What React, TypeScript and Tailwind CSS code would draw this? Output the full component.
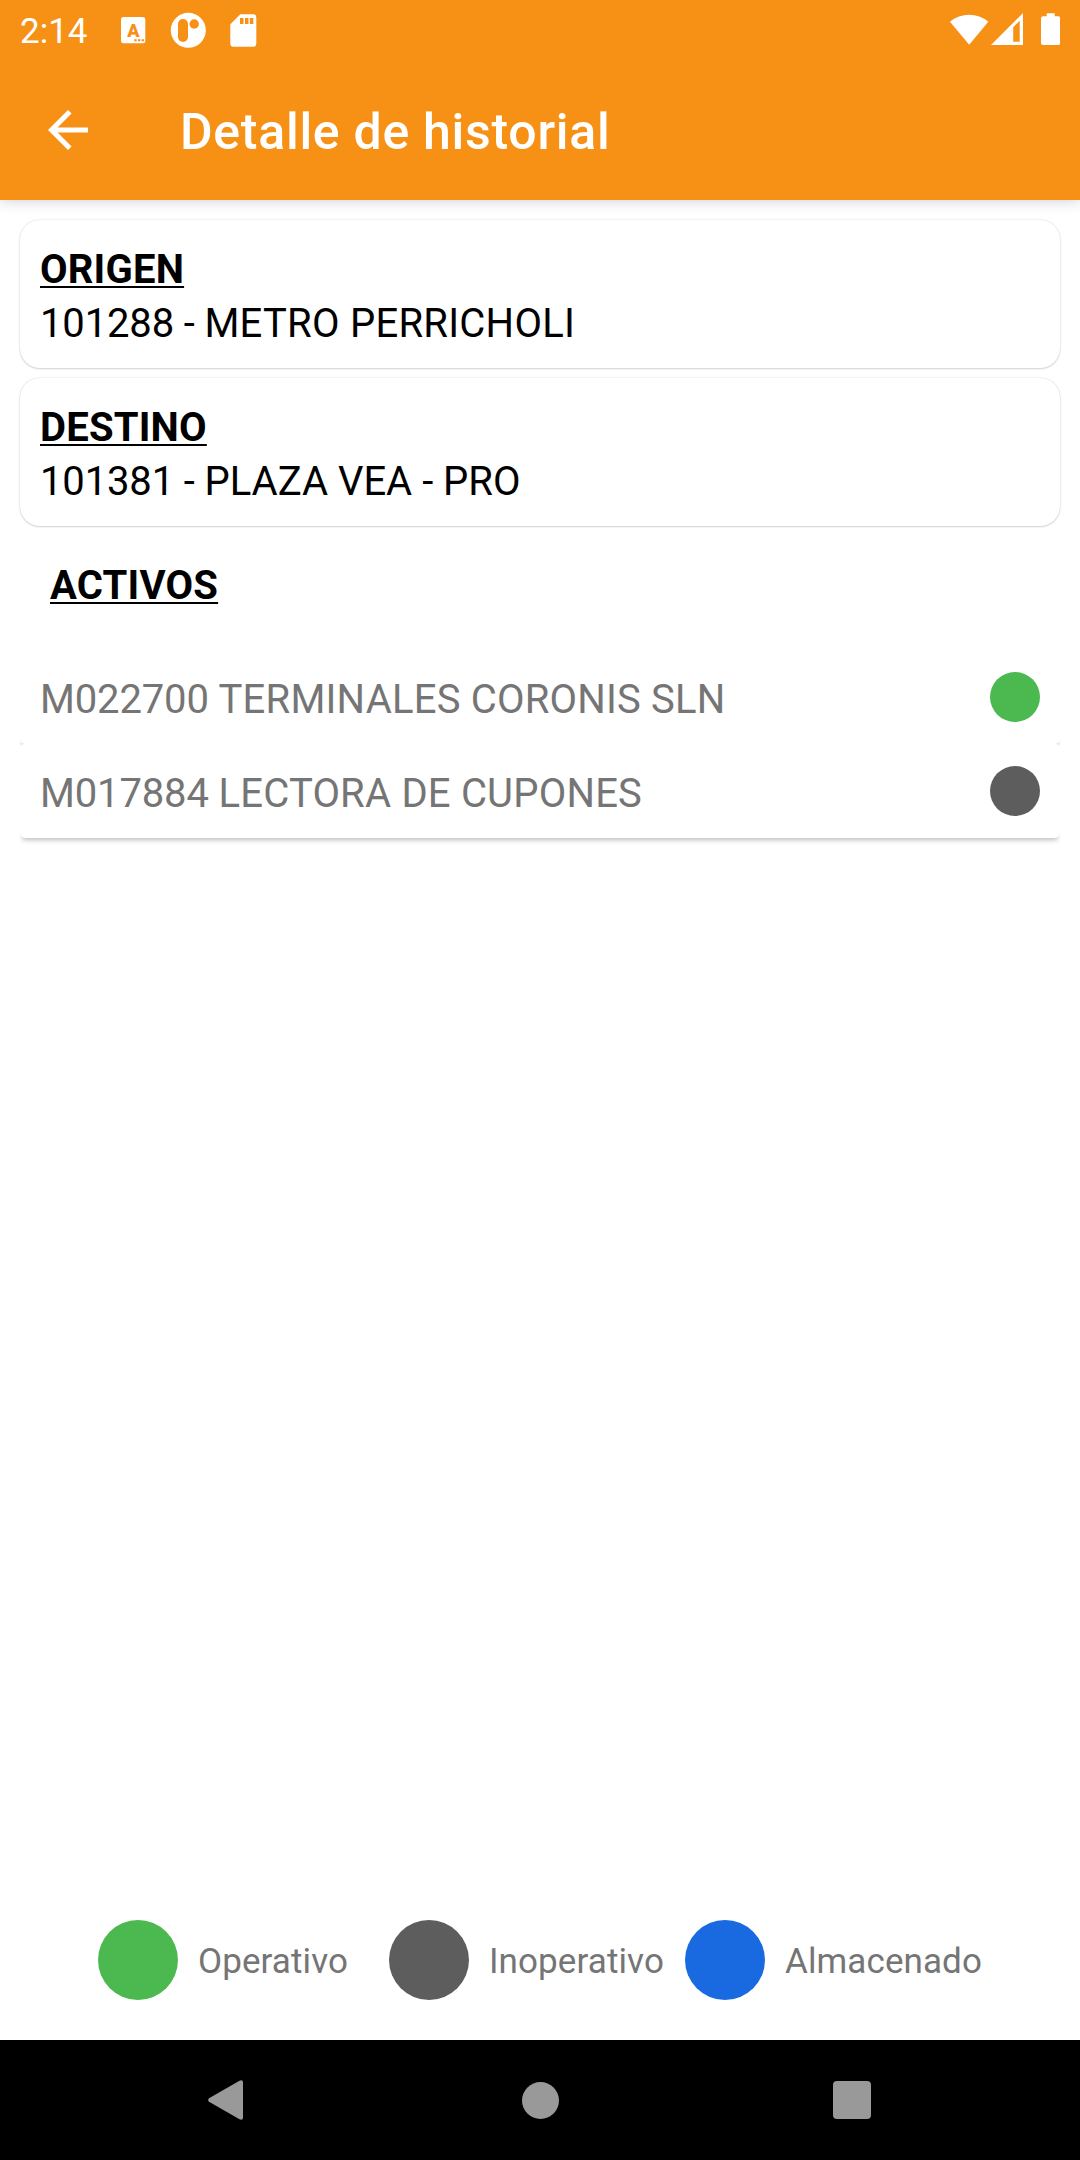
interface Asset {
  code: string;
  name: string;
  color: string;
}

interface Place {
  title: string;
  code: string;
  name: string;
  tracking: string;
}

const places: Place[] = [
  { title: "ORIGEN", code: "101288 - ", name: "METRO PERRICHOLI", tracking: "tracking-[0.25px]" },
  { title: "DESTINO", code: "101381 - ", name: "PLAZA VEA - PRO", tracking: "tracking-normal" },
];

const assets: Asset[] = [
  { code: "M022700 ", name: "TERMINALES CORONIS SLN", color: "bg-[#4cb950]" },
  { code: "M017884 ", name: "LECTORA DE CUPONES", color: "bg-[#5d5d5d]" },
];

const legend = [
  { label: "Operativo", color: "bg-[#4cb950]", width: "w-[291px]" },
  { label: "Inoperativo", color: "bg-[#5d5d5d]", width: "w-[296px]" },
  { label: "Almacenado", color: "bg-[#196ae1]", width: "" },
];

const StatusBar = () => (
  <div className="flex h-[63px] items-center justify-between px-5">
    <div className="flex items-center">
      <span className="w-[99px] text-[35px] leading-none">2:14</span>
      <svg width="140" height="63" viewBox="119 0 140 63" fill="currentColor">
        <rect x="121" y="17" width="24.3" height="26.3" rx="2.5" />
        <text x="133.3" y="36.5" fontSize="18" fontWeight="900" textAnchor="middle" fill="#f79116">
          A
        </text>
        <path d="M134.3 39.2h2.4v2h-2.4zM138 39.2h2.4v2H138zM141.6 39.2h2.4v2h-2.4z" fill="#f79116" />
        <circle cx="188.3" cy="30.3" r="17.5" />
        <rect x="178" y="19" width="10" height="23" rx="5" fill="#f79116" />
        <circle cx="194.2" cy="24" r="4.7" fill="#f79116" />
        <path d="M240.3 14.3h12.8a3.2 3.2 0 0 1 3.2 3.2v26a3.2 3.2 0 0 1-3.2 3.2h-19.6a3.2 3.2 0 0 1-3.2-3.2V24.3z" />
        <path d="M240 18h3.5v6H240zM245 18h3.5v6H245zM249.8 18h3.5v6h-3.5z" fill="#f79116" />
      </svg>
    </div>
    <svg width="110" height="63" viewBox="950 0 110 63" fill="currentColor">
      <path d="M950 21.7a30 30 0 0 1 38.3 0L969.2 44.8z" />
      <path fillRule="evenodd" d="M1023 13v32h-32zM1019.7 20.7l-6.5 6.6v14.5h6.5z" />
      <path d="M1046.7 13.3h8v3h3.5a2 2 0 0 1 2 2V43a2 2 0 0 1-2 2H1043a2 2 0 0 1-2-2V18.3a2 2 0 0 1 2-2h3.7z" />
    </svg>
  </div>
);

const AppBar = () => (
  <div className="flex h-[137px] items-center pl-12">
    <svg className="mb-1" width="40" height="40" viewBox="4 4 16 16" fill="currentColor">
      <path d="M20 11H7.83l5.59-5.59L12 4l-8 8 8 8 1.41-1.41L7.83 13H20v-2z" />
    </svg>
    <h1 className="ml-[92px] pt-px text-[50px] font-medium tracking-[0.0145em]">Detalle de historial</h1>
  </div>
);

const PlaceCard = ({ place }: { place: Place }) => (
  <section className="h-[148px] rounded-[20px] bg-white px-5 pt-[23px] text-[40px] leading-[54px] text-black shadow-[0_0_2px_rgba(0,0,0,0.16),0_1px_2px_rgba(0,0,0,0.14)]">
    <h2 className="font-bold tracking-[0.2px] underline decoration-2 underline-offset-[3px]">{place.title}</h2>
    <p className="whitespace-pre">
      <span className="tracking-[-0.15px]">{place.code}</span>
      <span className={place.tracking}>{place.name}</span>
    </p>
  </section>
);

const AssetRow = ({ item }: { item: Asset }) => (
  <li className="flex h-[94px] items-center justify-between rounded-[5px] bg-white px-5 text-[40px] text-[#757575] shadow-[0_4px_5px_-2px_rgba(0,0,0,0.26)]">
    <p className="pt-1.5 whitespace-pre">
      <span className="tracking-[-0.15px]">{item.code}</span>
      <span className="tracking-[0.2px]">{item.name}</span>
    </p>
    <span className={`size-[50px] rounded-full ${item.color}`} />
  </li>
);

const Legend = () => (
  <div className="mt-auto mb-10 flex pl-[78px] text-[35px] tracking-[0.1px] text-[#757575]">
    {legend.map(({ label, color, width }) => (
      <div key={label} className={`flex items-center gap-5 ${width}`}>
        <span className={`size-20 shrink-0 rounded-full ${color}`} />
        <span className="pt-1">{label}</span>
      </div>
    ))}
  </div>
);

const NavBar = () => (
  <nav className="flex h-[120px] items-center justify-between bg-black pr-[209px] pl-[208px] text-[#999]">
    <svg width="36" height="40" viewBox="0 0 36 40" fill="currentColor">
      <path d="M1 18.2 31.5.7Q35-.8 35 2.500v35q0 3.300-3.500 1.800L1 21.800Q-.7 20 1 18.200z" />
    </svg>
    <span className="ml-[3px] size-[37px] rounded-full bg-current" />
    <span className="size-[38px] rounded-[4px] bg-current" />
  </nav>
);

const App = () => (
  <div className="flex h-[2160px] w-[1080px] flex-col bg-white font-[Roboto,sans-serif]">
    <header className="bg-[#f79116] text-white shadow-[0_2px_12px_rgba(60,40,80,0.2)]">
      <StatusBar />
      <AppBar />
    </header>
    <main className="flex flex-1 flex-col px-5 pt-5">
      <div className="flex flex-col gap-[10px]">
        {places.map((place) => (
          <PlaceCard key={place.title} place={place} />
        ))}
      </div>
      <h2 className="mt-[33px] pl-[30px] text-[40px] leading-[54px] font-bold tracking-[0.2px] underline decoration-2 underline-offset-[3px]">
        ACTIVOS
      </h2>
      <ul className="mt-[37px] overflow-hidden pb-4">
        {assets.map((item) => (
          <AssetRow key={item.code} item={item} />
        ))}
      </ul>
      <Legend />
    </main>
    <NavBar />
  </div>
);

export default App;
